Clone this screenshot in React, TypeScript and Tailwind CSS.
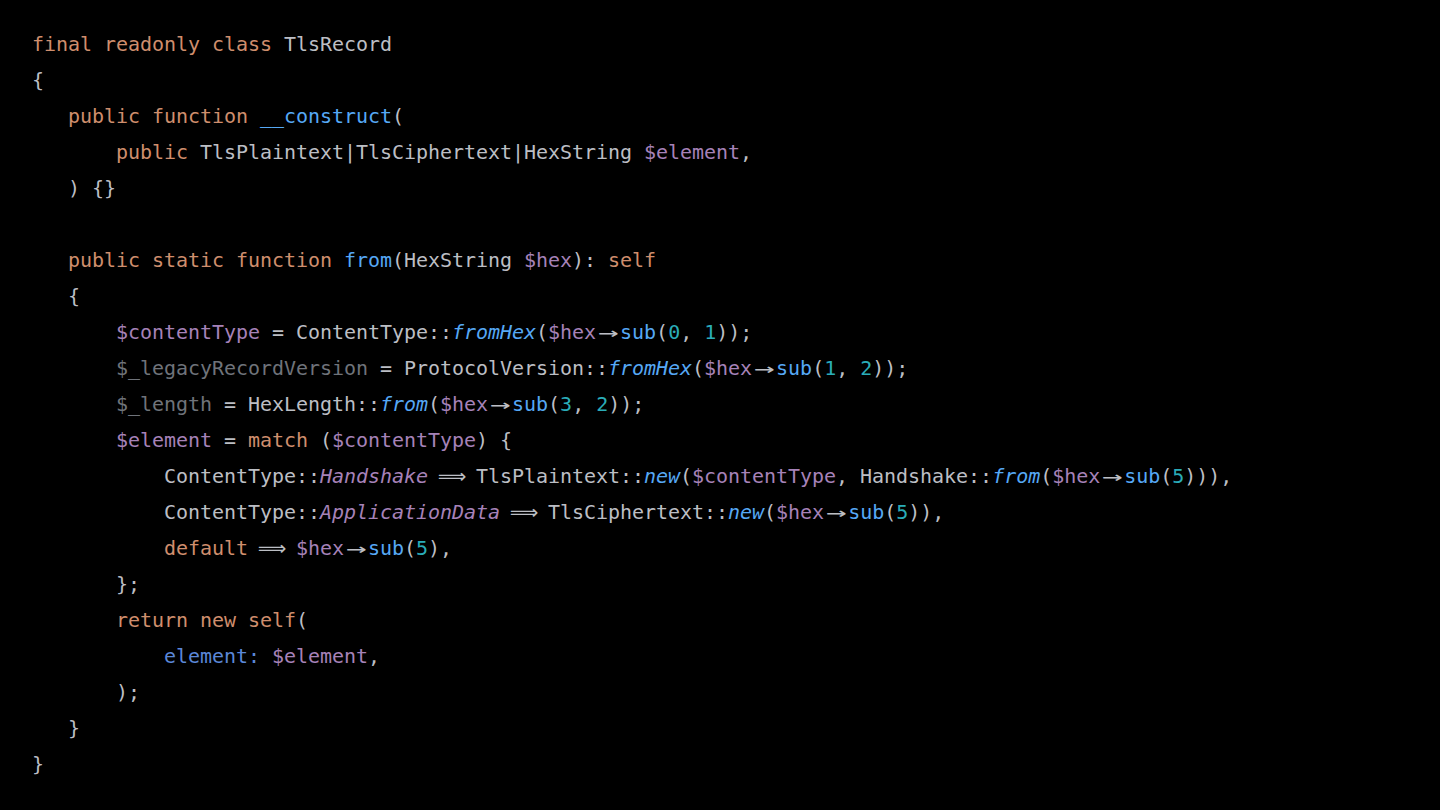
import React from "react"

type Tok = [string, string]

// token colours, written out in full so tailwind picks them up
const C: Record<string, string> = {
  k: "text-[#cf8e6d]",
  f: "text-[#56a8f5]",
  fi: "text-[#56a8f5] italic",
  v: "text-[#a682b8]",
  c: "text-[#a682b8] italic",
  n: "text-[#2aacb8]",
  t: "text-[#bcbec4]",
  u: "text-[#6f737a]",
  a: "text-[#5b87d8]",
}

const INDENT = ["pl-0", "pl-[36px]", "pl-[84px]", "pl-[132px]"]

const ARROW: Tok = ["arrow", "→"]
const FAT: Tok = ["fat", "⟹"]

const lines: { indent: number; toks: Tok[] }[] = [
  { indent: 0, toks: [["k", "final readonly class"], ["t", " TlsRecord"]] },
  { indent: 0, toks: [["t", "{"]] },
  { indent: 1, toks: [["k", "public function "], ["f", "__construct"], ["t", "("]] },
  {
    indent: 2,
    toks: [["k", "public "], ["t", "TlsPlaintext|TlsCiphertext|HexString "], ["v", "$element"], ["t", ","]],
  },
  { indent: 1, toks: [["t", ") {}"]] },
  { indent: 0, toks: [] },
  {
    indent: 1,
    toks: [
      ["k", "public static function "],
      ["f", "from"],
      ["t", "(HexString "],
      ["v", "$hex"],
      ["t", "): "],
      ["k", "self"],
    ],
  },
  { indent: 1, toks: [["t", "{"]] },
  {
    indent: 2,
    toks: [
      ["v", "$contentType"],
      ["t", " = ContentType::"],
      ["fi", "fromHex"],
      ["t", "("],
      ["v", "$hex"],
      ARROW,
      ["f", "sub"],
      ["t", "("],
      ["n", "0"],
      ["t", ", "],
      ["n", "1"],
      ["t", "));"],
    ],
  },
  {
    indent: 2,
    toks: [
      ["u", "$_legacyRecordVersion"],
      ["t", " = ProtocolVersion::"],
      ["fi", "fromHex"],
      ["t", "("],
      ["v", "$hex"],
      ARROW,
      ["f", "sub"],
      ["t", "("],
      ["n", "1"],
      ["t", ", "],
      ["n", "2"],
      ["t", "));"],
    ],
  },
  {
    indent: 2,
    toks: [
      ["u", "$_length"],
      ["t", " = HexLength::"],
      ["fi", "from"],
      ["t", "("],
      ["v", "$hex"],
      ARROW,
      ["f", "sub"],
      ["t", "("],
      ["n", "3"],
      ["t", ", "],
      ["n", "2"],
      ["t", "));"],
    ],
  },
  {
    indent: 2,
    toks: [["v", "$element"], ["t", " = "], ["k", "match"], ["t", " ("], ["v", "$contentType"], ["t", ") {"]],
  },
  {
    indent: 3,
    toks: [
      ["t", "ContentType::"],
      ["c", "Handshake"],
      ["t", " "],
      FAT,
      ["t", " TlsPlaintext::"],
      ["fi", "new"],
      ["t", "("],
      ["v", "$contentType"],
      ["t", ", Handshake::"],
      ["fi", "from"],
      ["t", "("],
      ["v", "$hex"],
      ARROW,
      ["f", "sub"],
      ["t", "("],
      ["n", "5"],
      ["t", "))),"],
    ],
  },
  {
    indent: 3,
    toks: [
      ["t", "ContentType::"],
      ["c", "ApplicationData"],
      ["t", " "],
      FAT,
      ["t", " TlsCiphertext::"],
      ["fi", "new"],
      ["t", "("],
      ["v", "$hex"],
      ARROW,
      ["f", "sub"],
      ["t", "("],
      ["n", "5"],
      ["t", ")),"],
    ],
  },
  {
    indent: 3,
    toks: [
      ["k", "default"],
      ["t", " "],
      FAT,
      ["t", " "],
      ["v", "$hex"],
      ARROW,
      ["f", "sub"],
      ["t", "("],
      ["n", "5"],
      ["t", "),"],
    ],
  },
  { indent: 2, toks: [["t", "};"]] },
  { indent: 2, toks: [["k", "return new self"], ["t", "("]] },
  { indent: 3, toks: [["a", "element:"], ["t", " "], ["v", "$element"], ["t", ","]] },
  { indent: 2, toks: [["t", ");"]] },
  { indent: 1, toks: [["t", "}"]] },
  { indent: 0, toks: [["t", "}"]] },
]

const Token = ({ tok }: { tok: Tok }) => {
  const [kind, text] = tok
  // ligature-style arrows take two cells, like the editor font draws them
  if (kind === "arrow")
    return (
      <span className="inline-flex w-[24px] justify-center text-[#bcbec4]">
        <span className="inline-block scale-x-[1.7]">{text}</span>
      </span>
    )
  if (kind === "fat")
    return (
      <span className="inline-flex w-[24px] justify-center text-[#bcbec4]">
        <span className="inline-block">{text}</span>
      </span>
    )
  return <span className={C[kind]}>{text}</span>
}

export default function App() {
  return (
    <div className="min-h-screen w-full bg-black">
      <div
        className="pt-[26px] pl-[32px] text-[20px] leading-[36px] tracking-[-0.04px] text-[#bcbec4]"
        style={{ fontFamily: '"DejaVu Sans Mono", "DejaVu Sans", "Liberation Mono", monospace' }}
      >
        {lines.map((line, i) => (
          <div key={i} className={`h-[36px] whitespace-pre ${INDENT[line.indent]}`}>
            {line.toks.map((tok, j) => (
              <Token key={j} tok={tok} />
            ))}
          </div>
        ))}
      </div>
    </div>
  )
}
